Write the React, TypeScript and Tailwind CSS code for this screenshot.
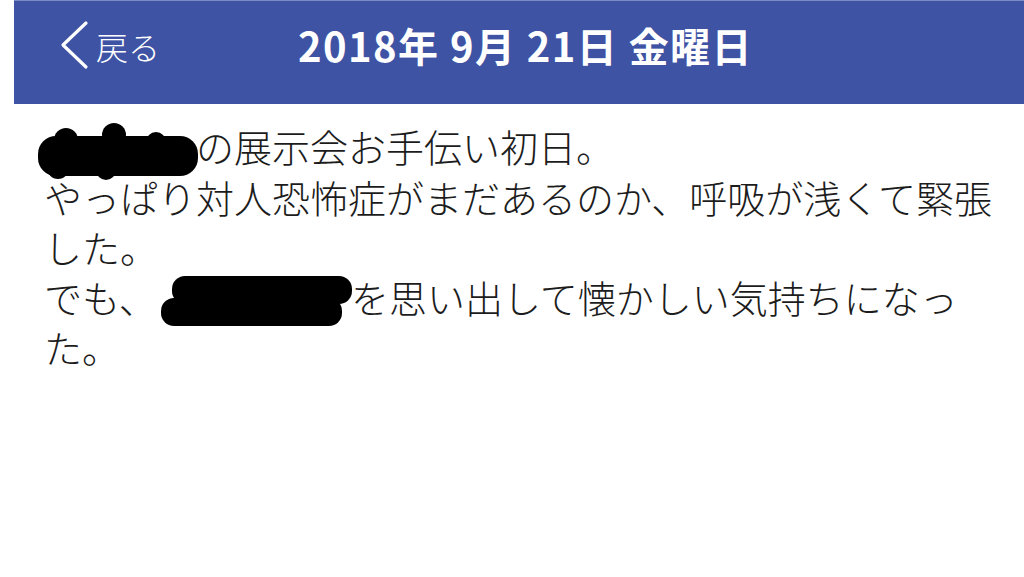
import React from "react";

const JP = '"Noto Sans CJK JP", "Noto Sans", sans-serif';

function Blob1() {
  return (
    <svg width="170" height="62" viewBox="0 0 170 62" className="absolute left-[-8px] top-[-10px]">
      <rect x="2" y="14" width="160" height="40" rx="18" fill="#000" />
      <circle cx="30" cy="18" r="12" fill="#000" />
      <circle cx="78" cy="13" r="12" fill="#000" />
      <circle cx="120" cy="20" r="10" fill="#000" />
      <circle cx="22" cy="46" r="11" fill="#000" />
      <circle cx="70" cy="48" r="10" fill="#000" />
    </svg>
  );
}

function Blob2() {
  return (
    <svg width="200" height="56" viewBox="0 0 200 56" className="absolute left-[4px] top-[-6px]">
      <rect x="11" y="0" width="180" height="28" rx="13" fill="#000" />
      <rect x="0" y="22" width="181" height="28" rx="13" fill="#000" />
    </svg>
  );
}

export default function App() {
  return (
    <div className="w-[1024px] h-[577px] bg-white overflow-hidden" style={{ fontFamily: JP }}>
      <header className="ml-[14px] h-[104px] bg-[#3e53a4] border-t border-[#7d8cc4]">
        <div className="relative h-[88px] flex items-center">
          <div className="flex items-center pl-[44px] gap-[6px] text-white">
            <svg width="32" height="50" viewBox="0 0 32 50">
              <path d="M28 3 L5 25 L28 47" fill="none" stroke="#fff" strokeWidth="3.2" strokeLinecap="round" strokeLinejoin="round" />
            </svg>
            <span className="text-[32px] font-light leading-none mt-[2px]">戻る</span>
          </div>
          <h1 className="absolute left-[284px] top-0 h-full flex items-center text-white font-bold text-[40px] tracking-[1.4px] leading-none">
            2018年 9月 21日 金曜日
          </h1>
        </div>
      </header>
      <main className="pl-[44px] pt-[17px] text-[38px] leading-[50px] text-[#1c1c1c] font-light whitespace-nowrap">
        <div>
          <span className="relative inline-block w-[152px] h-[40px] align-middle">
            <Blob1 />
          </span>
          の展示会お手伝い初日。
        </div>
        <div>やっぱり対人恐怖症がまだあるのか、呼吸が浅くて緊張</div>
        <div>した。</div>
        <div>
          でも、
          <span className="relative inline-block w-[194px] h-[40px] align-middle">
            <Blob2 />
          </span>
          を思い出して懐かしい気持ちになっ
        </div>
        <div>た。</div>
      </main>
    </div>
  );
}
